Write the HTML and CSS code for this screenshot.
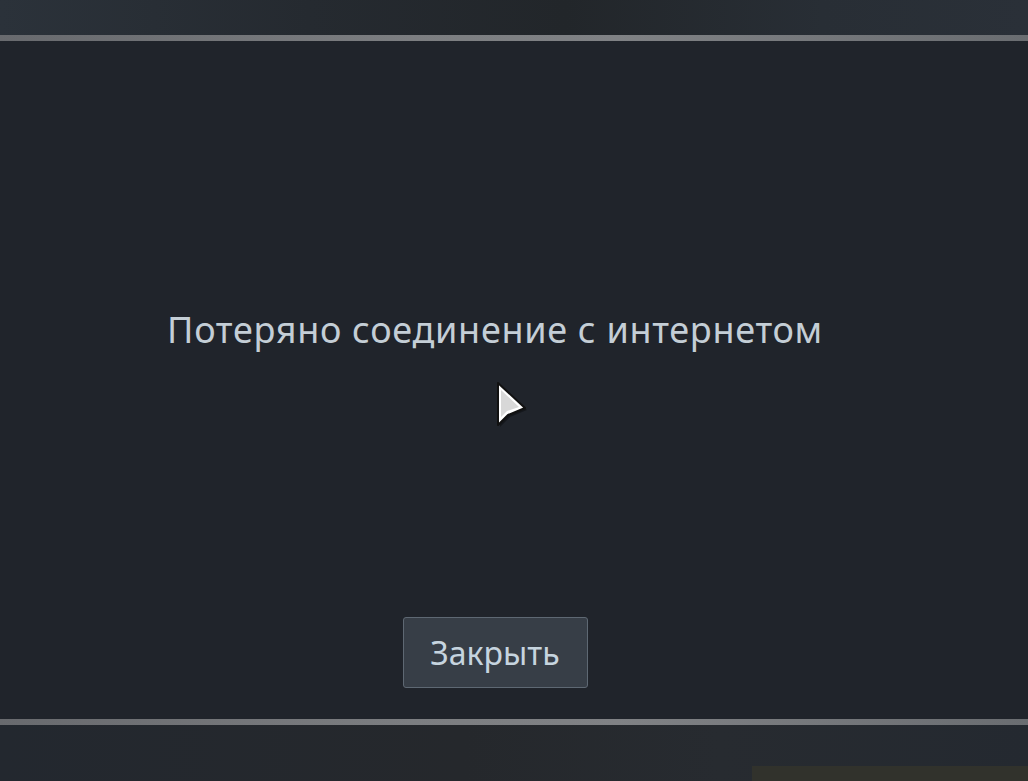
FILE: index.html
```html
<!DOCTYPE html>
<html lang="ru">
<head>
    <meta charset="UTF-8">
    <title>Ошибка</title>
    <link rel="stylesheet" href="styles.css">
</head>
<body>
    <div class="page">
        <div class="backdrop top"></div>
        <div class="dialog">
            <div class="edge"></div>
            <div class="body">
                <div class="message">Потеряно соединение с интернетом</div>
                <button class="btn">Закрыть</button>
            </div>
            <div class="edge"></div>
        </div>
        <div class="backdrop bottom">
            <div class="panel"></div>
        </div>
        <svg class="cursor" width="34" height="50" viewBox="0 0 34 50">
            <path d="M2 2 L2 44 L12 34 L29 27 Z" fill="#000" opacity="0.35" transform="translate(2,2)"/>
            <path d="M2 2 L2 44 L12 34 L29 27 Z" fill="#fff" stroke="#111" stroke-width="2" stroke-linejoin="round"/>
            <path d="M5 9 L5 36 L11 30 L23 26 Z" fill="#d8d8d8"/>
        </svg>
    </div>
</body>
</html>
```

FILE: styles.css
```css
* {
    margin: 0;
    padding: 0;
    box-sizing: border-box;
}
html, body {
    width: 100%;
    height: 100%;
    overflow: hidden;
    background: #22272e;
}
.page {
    position: relative;
    width: 1028px;
    height: 781px;
    display: flex;
    flex-direction: column;
}
.backdrop {
    background: linear-gradient(90deg, #2b323a 0%, #252a30 30%, #22262a 55%, #282e35 80%, #2a3038 100%);
}
.top {
    height: 35px;
}
.bottom {
    flex: 1;
    display: flex;
    align-items: flex-end;
    justify-content: flex-end;
    background: linear-gradient(90deg, #23282f 0%, #25282c 45%, #272b30 70%, #242930 100%);
}
.panel {
    width: 276px;
    height: 15px;
    background: #31322c;
}
.dialog {
    display: flex;
    flex-direction: column;
}
.edge {
    height: 6px;
    background: linear-gradient(90deg, #686a6e 0%, #7c7e81 40%, #808285 60%, #6a6d71 100%);
}
.body {
    height: 678px;
    background: #20242b;
    display: flex;
    flex-direction: column;
    align-items: center;
    padding-right: 38px;
    padding-top: 264px;
}
.message {
    font-family: "Noto Sans", "Open Sans", sans-serif;
    font-size: 36px;
    color: #c4ced6;
    letter-spacing: 0.7px;
    line-height: 50px;
}
.btn {
    margin-top: 262px;
    width: 185px;
    height: 71px;
    background: #373e47;
    border: 1px solid #5e6873;
    border-radius: 3px;
    font-family: "Noto Sans", "Open Sans", sans-serif;
    font-size: 32px;
    color: #c6d4df;
    cursor: pointer;
}
.cursor {
    position: absolute;
    left: 496px;
    top: 381px;
}
```
